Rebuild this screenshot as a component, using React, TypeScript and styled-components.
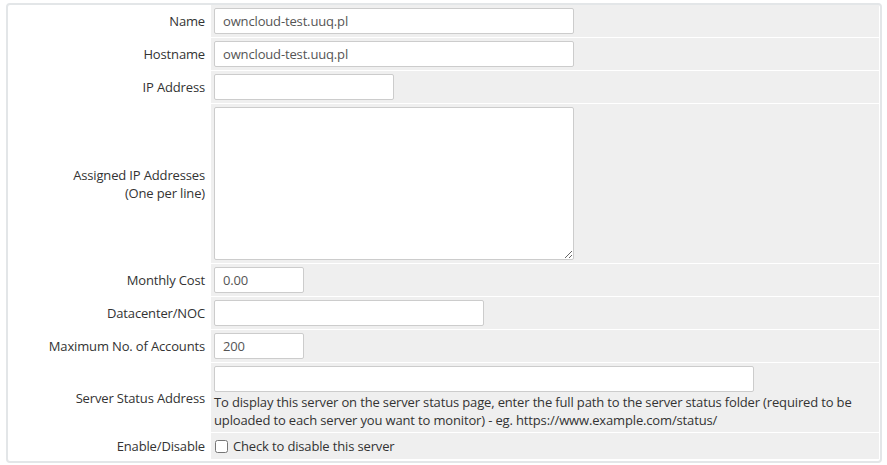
import styled, { createGlobalStyle } from 'styled-components'

const GlobalStyle = createGlobalStyle`
  html, body {
    margin: 0;
    padding: 0;
    background: #fff;
  }
  body {
    font-family: "Open Sans", "Liberation Sans", sans-serif;
    font-size: 13px;
    letter-spacing: -0.15px;
    color: #333;
  }
`

const Panel = styled.div`
  margin: 3px 5px 0 6px;
  border: 2px solid #e3e6e8;
  border-radius: 4px;
  padding: 0 1px 1px 1px;
  background: #fff;
`

const Row = styled.div`
  display: grid;
  grid-template-columns: 202px 1fr;
  border-bottom: 1px solid #fff;
`

const Label = styled.div`
  display: flex;
  align-items: center;
  justify-content: flex-end;
  text-align: right;
  padding-right: 6px;
  line-height: 18px;
`

const Field = styled.div`
  background: #efefef;
  padding: 3px;
  display: flex;
  flex-direction: column;
  align-items: flex-start;
`

const Input = styled.input<{ $w: number }>`
  box-sizing: border-box;
  width: ${({ $w }) => $w}px;
  height: 26px;
  border: 1px solid #ccc;
  border-radius: 2px;
  background: #fff;
  padding: 0 8px;
  font-family: inherit;
  font-size: 13px;
  letter-spacing: inherit;
  color: #555;
  outline: none;
`

const TextArea = styled.textarea`
  box-sizing: border-box;
  width: 360px;
  height: 153px;
  border: 1px solid #ccc;
  border-radius: 2px;
  background: #fff;
  font-family: inherit;
  font-size: 13px;
  resize: vertical;
`

const Help = styled.div`
  padding-top: 1px;
  line-height: 18px;
  color: #333;
  max-width: 650px;
`

const CheckLabel = styled.label`
  display: flex;
  align-items: center;
  gap: 5px;
  height: 20px;
`

const Check = styled.input`
  width: 13px;
  height: 13px;
  margin: 0 0 0 1px;
`

export default function App() {
  return (
    <>
      <GlobalStyle />
      <Panel>
        <Row>
          <Label>Name</Label>
          <Field>
            <Input $w={360} defaultValue="owncloud-test.uuq.pl" />
          </Field>
        </Row>
        <Row>
          <Label>Hostname</Label>
          <Field>
            <Input $w={360} defaultValue="owncloud-test.uuq.pl" />
          </Field>
        </Row>
        <Row>
          <Label>IP Address</Label>
          <Field>
            <Input $w={180} />
          </Field>
        </Row>
        <Row>
          <Label>
            Assigned IP Addresses
            <br />
            (One per line)
          </Label>
          <Field>
            <TextArea />
          </Field>
        </Row>
        <Row>
          <Label>Monthly Cost</Label>
          <Field>
            <Input $w={90} defaultValue="0.00" />
          </Field>
        </Row>
        <Row>
          <Label>Datacenter/NOC</Label>
          <Field>
            <Input $w={270} />
          </Field>
        </Row>
        <Row>
          <Label>Maximum No. of Accounts</Label>
          <Field>
            <Input $w={90} defaultValue="200" />
          </Field>
        </Row>
        <Row>
          <Label>Server Status Address</Label>
          <Field>
            <Input $w={540} />
            <Help>
              To display this server on the server status page, enter the full path to the server
              status folder (required to be uploaded to each server you want to monitor) - eg.
              https://www.example.com/status/
            </Help>
          </Field>
        </Row>
        <Row>
          <Label>Enable/Disable</Label>
          <Field>
            <CheckLabel>
              <Check type="checkbox" />
              Check to disable this server
            </CheckLabel>
          </Field>
        </Row>
      </Panel>
    </>
  )
}
